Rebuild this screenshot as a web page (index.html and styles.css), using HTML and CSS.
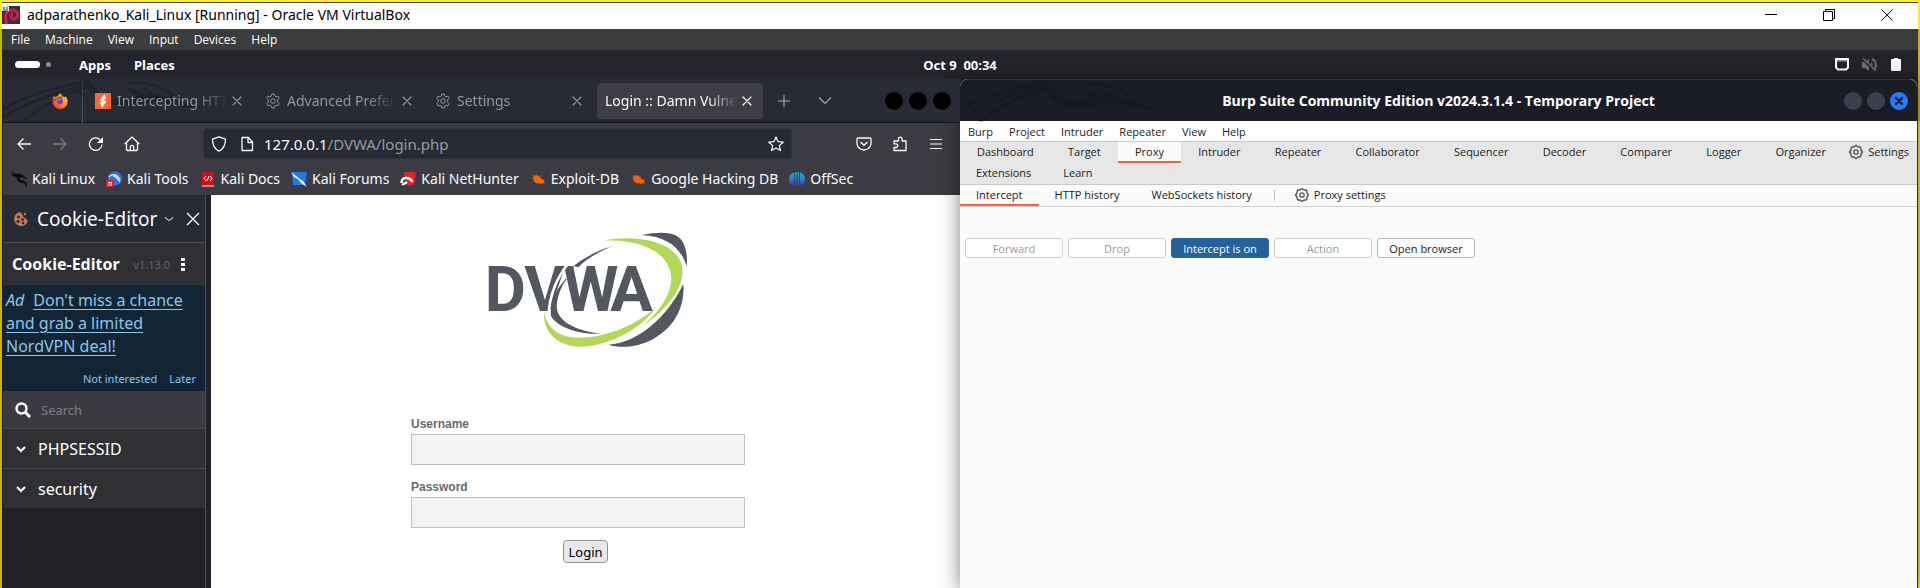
FILE: index.html
```html
<!DOCTYPE html>
<html lang="en">
<head>
<meta charset="utf-8">
<title>adparathenko_Kali_Linux [Running] - Oracle VM VirtualBox</title>
<link rel="stylesheet" href="styles.css">
</head>
<body>
<svg class="defs" width="0" height="0" aria-hidden="true">
  <symbol id="gear" viewBox="0 0 16 16">
    <path d="M6.8 1h2.4l.5 2 1.3.8 2-.6 1.2 2.1-1.5 1.5v2.4l1.5 1.5-1.2 2.1-2-.6-1.3.8-.5 2H6.800l-.5-2-1.300-.8-2 .6-1.200-2.100 1.500-1.500V6.800L1.800 5.300 3 3.200l2 .6L6.300 3z" fill="none" stroke="currentColor" stroke-linejoin="round"/>
    <circle cx="8" cy="8" r="2.300" fill="none" stroke="currentColor"/>
  </symbol>
  <symbol id="cog" viewBox="0 0 16 16">
    <path d="M8 1.500 9.700 2.700 12.500 3.300 13.100 6.200 14.500 8 13.100 9.800 12.500 12.700 9.700 13.300 8 14.500 6.300 13.300 3.500 12.700 2.900 9.800 1.500 8 2.900 6.200 3.500 3.300 6.300 2.700z" fill="none" stroke="currentColor" stroke-width="1.400" stroke-linejoin="round"/>
    <circle cx="8" cy="8" r="2.200" fill="none" stroke="currentColor" stroke-width="1.300"/>
  </symbol>
  <symbol id="cross" viewBox="0 0 16 16">
    <path d="M4 4l8 8M12 4l-8 8" fill="none" stroke="currentColor" stroke-width="1.200" stroke-linecap="round"/>
  </symbol>
  <symbol id="spider" viewBox="0 0 16 16">
    <path d="M3 5c2-1 5-1 7 1l2 2 3 2-1 1 .5 2-2-1-1 1-2-.5C6 12.500 4 11 3.500 9z" fill="#f2640c"/>
    <path d="M2 4l2 2M1 7.500h3M6 3l1 2M3.500 9.500L2 11M7 12l-1 1.500M10 4l1 2" stroke="#b5500f" stroke-width=".8" fill="none"/>
  </symbol>
  <symbol id="chev" viewBox="0 0 12 12">
    <path d="M2 4l4 4 4-4" fill="none" stroke="currentColor" stroke-width="2.200"/>
  </symbol>
  <symbol id="dragon" viewBox="0 0 210 42">
    <path d="M0 30C25 16 50 8 82 3M0 38C30 20 60 12 84 6M20 42C42 24 62 14 86 8M80 0c8 12 14 22 26 24 16 2 32-6 50-2 12 2 22 6 40 6M126 4c18-2 34 4 46 14M66 4l16 14" fill="none" stroke="#10131b" stroke-width="2.500"/>
    <path d="M78 0h8c6 10 14 18 24 20 16 2 30-8 48-4 14 4 24 10 38 12-20 0-32-8-50-4-14 2-30 6-42 0C92 18 86 8 78 0zM124 8l22 8-8-10 22 14-30-4z" fill="#10131b"/>
  </symbol>
</svg>

<header class="titlebar">
  <svg class="ico18" viewBox="0 0 18 18"><rect width="18" height="18" fill="#33303a"/><path d="M5 18C2 12 3 5 9 4c7-1 9 8 3 9-4 0-4-5-1-5" fill="none" stroke="#d8174f" stroke-width="3"/><rect width="7" height="5" fill="#e8e8e8"/><path d="M1 2h2M4 2h2M1 4h5" stroke="#444"/></svg>
  <span class="title">adparathenko_Kali_Linux [Running] - Oracle VM VirtualBox</span>
  <div class="caption">
    <button aria-label="Minimize"><svg viewBox="0 0 14 14"><path d="M1 6.500h12" stroke="#000"/></svg></button>
    <button aria-label="Restore"><svg viewBox="0 0 14 14"><path d="M1.500 3.500h9v9h-9zM3.500 3.500v-2h9v9h-2" fill="none" stroke="#000"/></svg></button>
    <button aria-label="Close"><svg viewBox="0 0 14 14"><path d="M1.500 1.500l11 11M12.500 1.500l-11 11" stroke="#000"/></svg></button>
  </div>
</header>

<nav class="vmmenu">
  <button>File</button><button>Machine</button><button>View</button><button>Input</button><button>Devices</button><button>Help</button>
</nav>

<div class="panel">
  <div class="panel-left">
    <span class="pill"></span><span class="dot"></span>
    <button class="apps">Apps</button><button>Places</button>
  </div>
  <time class="clock">Oct 9&nbsp; 00:34</time>
  <div class="tray">
    <svg viewBox="0 0 16 16"><path d="M2 2h12v8.500l-2 2H4l-2-2z" fill="none" stroke="#fff" stroke-width="2"/><path d="M4 2.500v2M6 2.500v2M8 2.500v2M10 2.500v2M12 2.500v2" stroke="#fff"/></svg>
    <svg viewBox="0 0 16 16"><path d="M1 5h3l4-3v12l-4-3H1zM10 5c2 1 2 4 0 6z" fill="#6d6e74"/><path d="M11 2c5 2 5 9 1 12" fill="none" stroke="#6d6e74" stroke-width="2"/><path d="M1 1l14 14" stroke="#23242c" stroke-width="3"/><path d="M2 1l13 13" stroke="#6d6e74" stroke-width="1.500"/></svg>
    <svg viewBox="0 0 16 16"><path d="M6 1h4v1h2q1 0 1 1v10q0 1-1 1H4q-1 0-1-1V3q0-1 1-1h2z" fill="#fff"/></svg>
  </div>
</div>

<main class="desktop">
  <section class="firefox">
    <div class="tabstrip">
      <svg class="watermark" aria-hidden="true"><use href="#dragon"/></svg>
      <div class="pinned"><svg class="ico" viewBox="0 0 16 16"><defs><linearGradient id="ff" x1="1" y1="0" x2="0" y2="1"><stop offset="0" stop-color="#ffe63b"/><stop offset=".5" stop-color="#ff8b1a"/><stop offset="1" stop-color="#f4155f"/></linearGradient></defs><path d="M8 16A7.600 7.600 0 0 1 .4 8c0-2 .8-4 2-5.200l.6 1.800C4 3.500 5 3.200 6 3.200 6 2 7.500.5 8.500 0c.2 2 3 2.500 3.800 4.500l.8-1.300c2 2 2.600 3.800 2.500 5.600A7.600 7.600 0 0 1 8 16z" fill="url(#ff)"/><circle cx="8" cy="8.300" r="3" fill="#7339dd"/><path d="M3.500 6c2-1 4-.5 5 .8-1.500.2-2 1-3.500 1z" fill="#ffa51f"/></svg></div>
      <div class="tab">
        <svg class="ico" viewBox="0 0 16 16"><rect width="16" height="16" fill="#ff6633"/><path d="M9.500 1L4.500 8h3L5 9.500 7 15l4.500-7h-3L11 5z" fill="#fff"/></svg>
        <span class="tab-label">Intercepting HTTP traffic</span><svg class="ico"><use href="#cross"/></svg>
      </div>
      <div class="tab"><svg class="ico"><use href="#gear"/></svg><span class="tab-label">Advanced Preferences</span><svg class="ico"><use href="#cross"/></svg></div>
      <div class="tab"><svg class="ico"><use href="#gear"/></svg><span class="tab-label">Settings</span><svg class="ico"><use href="#cross"/></svg></div>
      <div class="tab active"><span class="tab-label">Login :: Damn Vulnerable</span><svg class="ico"><use href="#cross"/></svg></div>
      <button class="strip-btn" aria-label="New tab"><svg class="ico" viewBox="0 0 16 16"><path d="M8 2v12M2 8h12" stroke="#a4a4a8" stroke-width="1.200"/></svg></button>
      <button class="strip-btn" aria-label="List all tabs"><svg class="ico" viewBox="0 0 16 16"><path d="M2 4.500l6 6 6-6" fill="none" stroke="#a4a4a8" stroke-width="1.200"/></svg></button>
      <div class="dots"><i></i><i></i><i></i></div>
    </div>

    <div class="toolbar">
      <div class="nav">
        <button aria-label="Back"><svg class="ico" viewBox="0 0 16 16"><path d="M15 8H2M7.500 2.500L2 8l5.500 5.500" fill="none" stroke="#fbfbfe" stroke-width="1.300"/></svg></button>
        <button aria-label="Forward"><svg class="ico" viewBox="0 0 16 16"><path d="M1 8h13M8.500 2.500L14 8l-5.500 5.500" fill="none" stroke="#7b7b80" stroke-width="1.300"/></svg></button>
        <button aria-label="Reload"><svg class="ico" viewBox="0 0 16 16"><path d="M14 8.500A6.300 6.300 0 1 1 12 3.500" fill="none" stroke="#fbfbfe" stroke-width="1.300"/><path d="M15 1v6H9z" fill="#fbfbfe"/></svg></button>
        <button aria-label="Home"><svg class="ico" viewBox="0 0 16 16"><path d="M.7 8L8 1l7.300 7M2.500 6.500V13.500q0 1 1 1h9q1 0 1-1V6.500M6.300 14.500V11a1.700 1.700 0 0 1 3.400 0v3.500" fill="none" stroke="#fbfbfe" stroke-width="1.300" stroke-linejoin="round"/></svg></button>
      </div>
      <div class="urlbar">
        <svg class="ico" viewBox="0 0 16 16"><path d="M8 .8l6.500 2.400c0 5-1.500 9.500-6.500 12C3 12.700 1.500 8.200 1.500 3.200z" fill="none" stroke="#fbfbfe" stroke-width="1.300" stroke-linejoin="round"/></svg>
        <svg class="ico" viewBox="0 0 16 16"><path d="M3 1.500h6.500L13.500 6v8.500H3zM9 1.500V6.500h4.500" fill="none" stroke="#fbfbfe" stroke-width="1.300" stroke-linejoin="round"/></svg>
        <span class="url"><b>127.0.0.1</b>/DVWA/login.php</span>
        <svg class="ico" viewBox="0 0 16 16"><path d="M8 1l2.100 4.700 5.100.5-3.900 3.400 1.200 5L8 12l-4.500 2.600 1.200-5L.8 6.200l5.100-.5z" fill="none" stroke="#fbfbfe" stroke-width="1.200" stroke-linejoin="round"/></svg>
      </div>
      <div class="tools">
        <button aria-label="Pocket"><svg class="ico" viewBox="0 0 16 16"><path d="M2 2h12q1 0 1 1v4.500a7 6.500 0 0 1-14 0V3q0-1 1-1z" fill="none" stroke="#fbfbfe" stroke-width="1.300"/><path d="M4.500 6L8 9.300 11.500 6" fill="none" stroke="#fbfbfe" stroke-width="1.500"/></svg></button>
        <button aria-label="Extensions"><svg class="ico" viewBox="0 0 16 16"><path d="M2 7V5h4.500V3a1.800 1.800 0 0 1 3.600 0v2H14v9.500H2V11.500h2a1.800 1.800 0 0 0 0-3.600H2z" fill="none" stroke="#fbfbfe" stroke-width="1.300" stroke-linejoin="round"/></svg></button>
        <button aria-label="Menu"><svg class="ico" viewBox="0 0 16 16"><path d="M2 3.500h12M2 8h12M2 12.500h12" stroke="#fbfbfe" stroke-width="1.200"/></svg></button>
      </div>
    </div>

    <nav class="bookmarks">
      <a href="#"><svg class="ico" viewBox="0 0 16 16"><path d="M0 1.500l5 1.500 4 0 4 2 3 3-4-2-4 .5 1 2.500 4 1 2.500 2 .5 4-3-4-5-1-2-3 0-2-6-2 4-.5z" fill="#0c0c0e" stroke="#0c0c0e" stroke-width=".5"/></svg>Kali Linux</a>
      <a href="#"><svg class="ico" viewBox="0 0 16 16"><circle cx="9" cy="7.500" r="7" fill="#2b72e8"/><path d="M3 6c3-4 8-3 11 3M7 5c3 0 4 2 7 6" fill="none" stroke="#dfeaff" stroke-width="1.300"/><rect y="9" width="8" height="7" rx="1" fill="#e02020"/><path d="M2 11.500h4M3 11.500V15M5.200 11.500V15" stroke="#fff" stroke-width=".9"/></svg>Kali Tools</a>
      <a href="#"><svg class="ico" viewBox="0 0 16 16"><path d="M2 1h12v13H2z" fill="#d30c14"/><path d="M2 15h12" stroke="#eee"/><path d="M6 5L4 7.500 6 10M10 5l2 2.500-2 2.500M9 5l-2 5" fill="none" stroke="#fff"/></svg>Kali Docs</a>
      <a href="#"><svg class="ico" viewBox="0 0 16 16"><path d="M1 1h15l-2 13H2z" fill="#1f78ee"/><path d="M0 1l5 4 4 3 3 2 4 6-6-4-3-4-4-2z" fill="#fff"/></svg>Kali Forums</a>
      <a href="#"><svg class="ico" viewBox="0 0 16 16"><path d="M3 1h13l-2 13-6 1z" fill="#e0222d"/><path d="M1.500 12c0-6 8-7 11-1M2 13c2 1 3-1 5-2" fill="none" stroke="#fff" stroke-width="2.500"/></svg>Kali NetHunter</a>
      <a href="#"><svg class="ico"><use href="#spider"/></svg>Exploit-DB</a>
      <a href="#"><svg class="ico"><use href="#spider"/></svg>Google Hacking DB</a>
      <a href="#"><svg class="ico" viewBox="0 0 16 16"><defs><linearGradient id="os" x1="0" y1="0" x2="0" y2="1"><stop offset="0" stop-color="#1cb5d8"/><stop offset="1" stop-color="#4a35c8"/></linearGradient></defs><path d="M5 1.500Q0 3 0 8q0 4 3 6.500Q6 13 5 1.500zM11 1.500Q16 3 16 8q0 4-3 6.500Q10 13 11 1.500zM6 1h1.500v14H6zM8.500 1H10v14H8.500z" fill="url(#os)"/></svg>OffSec</a>
    </nav>

    <div class="content">
      <aside class="sidebar">
        <div class="side-head">
          <svg class="ico" viewBox="0 0 16 16"><path d="M8 1a7 7 0 1 0 7 8q-2 .5-2.500-2-2.500 0-2.500-2.500Q8 4 8 1z" fill="#c17a55"/><circle cx="5.500" cy="6" r="1.400" fill="#2a2530"/><circle cx="5" cy="10.500" r="1.400" fill="#2a2530"/><circle cx="9.500" cy="8.500" r="1.300" fill="#2a2530"/><circle cx="10" cy="12" r="1.200" fill="#2a2530"/><circle cx="12" cy="3" r="1.200" fill="#c17a55"/></svg>
          <button class="side-title">Cookie-Editor<svg class="ico10" viewBox="0 0 12 12"><path d="M1 4l5 4 5-4" fill="none" stroke="#cfcfd4" stroke-width="1.300"/></svg></button>
          <button class="side-close" aria-label="Close sidebar"><svg class="ico" viewBox="0 0 16 16"><path d="M2 2l12 12M14 2l-12 12" stroke="#fbfbfe" stroke-width="1.300"/></svg></button>
        </div>
        <div class="ext-head">
          <strong>Cookie-Editor</strong><small>v1.13.0</small>
          <button aria-label="Options"><svg class="kebab" viewBox="0 0 6 14"><path d="M1 1h4v3H1zM1 6h4v3H1zM1 11h4v3H1z" fill="#fff"/></svg></button>
        </div>
        <div class="ad">
          <p><em>Ad</em><a href="#">Don't miss a chance and grab a limited NordVPN deal!</a></p>
          <div class="ad-actions"><button>Not interested</button><button>Later</button></div>
        </div>
        <label class="search"><svg class="ico" viewBox="0 0 16 16"><circle cx="6.500" cy="6.500" r="5" fill="none" stroke="#fff" stroke-width="2.400"/><path d="M10 10l5 5" stroke="#fff" stroke-width="2.800"/></svg><input type="text" placeholder="Search" aria-label="Search"></label>
        <button class="cookie"><svg class="ico12"><use href="#chev"/></svg>PHPSESSID</button>
        <button class="cookie"><svg class="ico12"><use href="#chev"/></svg>security</button>
      </aside>

      <div class="page">
        <svg class="logo" viewBox="0 0 690 420" role="img" aria-label="DVWA">
          <path d="M432 76C370 94 330 120 308 138L322 142C350 112 390 92 432 76z" fill="#53575f"/>
          <text x="41 160 276 418" y="273" class="logo-text">DVWA</text>
          <path d="M290 132C262 170 236 215 232 290" fill="none" stroke="#fff" stroke-width="8"/>
          <path d="M284 176C250 216 236 248 240 288 262 326 330 344 390 341 300 330 250 296 258 248 262 222 272 196 288 176z" fill="#53575f"/>
          <path d="M512 45C575 32 618 36 634 64 646 86 650 110 647 139 630 84 590 50 512 45z" fill="#53575f"/>
          <path d="M637 192C642 260 612 320 548 356 500 382 450 386 412 374 500 370 590 290 637 192z" fill="#53575f"/>
          <path d="M398 62C500 42 600 66 628 122 654 186 596 264 518 316 590 250 616 190 592 138 566 84 490 58 398 62z" fill="#b4d757"/>
          <path d="M219 277C232 336 280 360 350 352 430 344 510 304 556 260 520 320 420 376 334 380 262 382 216 340 219 277z" fill="#b4d757"/>
        </svg>
        <form class="login">
          <div class="fields">
            <label for="user">Username</label>
            <input id="user" type="text">
            <label for="pass">Password</label>
            <input id="pass" type="password">
          </div>
          <button type="button">Login</button>
        </form>
      </div>
    </div>
  </section>

  <section class="burp">
    <div class="burp-title">
      <svg class="watermark" aria-hidden="true"><use href="#dragon"/></svg>
      <h1>Burp Suite Community Edition v2024.3.1.4 - Temporary Project</h1>
      <div class="wm"><button aria-label="Minimize"></button><button aria-label="Maximize"></button><button class="close" aria-label="Close"><svg viewBox="0 0 18 18"><path d="M6 6l6 6M12 6l-6 6" stroke="#0d1a33" stroke-width="2.400" stroke-linecap="round"/></svg></button></div>
    </div>
    <nav class="burp-menu"><button>Burp</button><button>Project</button><button>Intruder</button><button>Repeater</button><button>View</button><button>Help</button></nav>
    <nav class="burp-tabs">
      <div class="row spread">
        <button>Dashboard</button><button>Target</button><button class="on">Proxy</button><button>Intruder</button><button>Repeater</button><button>Collaborator</button><button>Sequencer</button><button>Decoder</button><button>Comparer</button><button>Logger</button><button>Organizer</button>
        <button class="settings"><svg class="ico"><use href="#cog"/></svg>Settings</button>
      </div>
      <div class="row"><button>Extensions</button><button>Learn</button></div>
    </nav>
    <nav class="subtabs">
      <button class="on">Intercept</button><button>HTTP history</button><button>WebSockets history</button><span class="sep"></span>
      <button class="settings"><svg class="ico"><use href="#cog"/></svg>Proxy settings</button>
    </nav>
    <div class="actions">
      <button disabled>Forward</button><button disabled>Drop</button><button class="primary">Intercept is on</button><button disabled>Action</button><button>Open browser</button>
    </div>
  </section>
</main>
</body>
</html>
```
FILE: styles.css
```css
* { box-sizing: border-box; }

body {
  margin: 0;
  min-height: 100vh;
  padding: 2px 2px 0 2px;
  display: flex;
  flex-direction: column;
  font-family: "Noto Sans", sans-serif;
  background:
    linear-gradient(#ffe838 29px, #c9b407 29px) left / 50% 100% no-repeat,
    linear-gradient(#ffe838 29px, #c9b407 29px, #c9b407 121px, #ffe94f 121px) right / 50% 100% no-repeat;
}

button {
  margin: 0;
  padding: 0;
  border: 0;
  background: none;
  color: inherit;
  font: inherit;
  white-space: nowrap;
}

svg { display: block; flex: none; }
.defs { position: absolute; }
.ico { width: 16px; height: 16px; }
.ico18 { width: 18px; height: 18px; }
.ico12 { width: 12px; height: 12px; }
.ico10 { width: 10px; height: 10px; }

/* Host window */
.titlebar {
  height: 27px;
  padding-bottom: 3px;
  display: flex;
  align-items: center;
  gap: 7px;
  background: #fff;
  border-top: 1px solid #4b4720;
  color: #000;
}
.title { font-size: 14px; line-height: 18px; flex: 1; white-space: nowrap; }
.caption { display: flex; gap: 44px; padding-right: 24px; }
.caption svg { width: 14px; height: 14px; }

.vmmenu {
  height: 21px;
  padding: 0 9px;
  display: flex;
  align-items: center;
  gap: 15px;
  background: #3b3c3d;
  color: #fff;
  font-family: "Open Sans", sans-serif;
  font-size: 12px;
}

/* Guest desktop */
.panel {
  height: 29px;
  display: grid;
  grid-template-columns: 1fr auto 1fr;
  align-items: center;
  background: #23242c;
  color: #fff;
  font-size: 13px;
  font-weight: 700;
}
.panel-left { display: flex; align-items: center; padding-left: 13px; }
.pill { width: 25px; height: 7px; border-radius: 4px; background: #fff; }
.dot { width: 5px; height: 5px; margin-left: 6px; border-radius: 50%; background: #8d8e94; }
.panel-left .apps { margin: 0 23px 0 28px; }
.tray { display: flex; justify-content: flex-end; gap: 11px; padding-right: 14px; }
.tray svg { width: 16px; height: 16px; }

.desktop { flex: 1; display: grid; grid-template-columns: 1fr 1fr; background: #23242c; }

/* Firefox */
.firefox { display: flex; flex-direction: column; min-width: 0; border-left: 1px solid #191a1f; background: #3b3c43; color: #fbfbfe; font-size: 14px; }
.tabstrip {
  position: relative;
  height: 44px;
  padding-right: 9px;
  display: flex;
  align-items: center;
  background: #282a35;
  border-bottom: 1px solid #15161b;
  color: #94959c;
}
.watermark { position: absolute; left: 0; top: 0; width: 210px; height: 42px; opacity: .35; }
.pinned { width: 80px; height: 44px; padding: 14px 0 0 49px; border-right: 1px solid #4c4d57; }
.tab { position: relative; flex: 0 1 170px; min-width: 0; height: 36px; padding: 0 8px 0 12px; display: flex; align-items: center; gap: 6px; }
.tab-label {
  flex: 1;
  min-width: 0;
  overflow: hidden;
  white-space: nowrap;
  mask-image: linear-gradient(to left, transparent, #000 30px);
}
.tab .tab-label + .ico { margin-left: -4px; }
.tab.active { flex-basis: 166px; margin-left: 4px; padding: 0 8px; border-radius: 4px; background: #3d3e46; color: #fbfbfe; }
.strip-btn { width: 41px; display: grid; place-items: center; }
.dots { display: flex; gap: 6px; margin-left: auto; }
.dots i { width: 18px; height: 18px; border-radius: 50%; background: #000; }

.toolbar { height: 41px; padding: 0 16px 0 13px; display: flex; align-items: center; }
.nav { display: flex; gap: 20px; }
.urlbar {
  flex: 1;
  height: 31px;
  margin: 0 64px 0 63px;
  padding: 0 7px;
  display: flex;
  align-items: center;
  gap: 12px;
  border: 1px solid #30313a;
  border-radius: 4px;
  background: #272935;
  color: #9a9ba2;
  font-size: 15px;
}
.url { flex: 1; white-space: nowrap; margin-left: -3px; }
.url b { font-weight: 400; color: #fbfbfe; }
.tools { display: flex; gap: 20px; }

.bookmarks { height: 31px; padding: 0 8px 2px 8px; display: flex; align-items: center; gap: 11px; }
.bookmarks a { display: flex; align-items: center; gap: 5px; color: #fbfbfe; text-decoration: none; white-space: nowrap; }

.content { flex: 1; display: flex; }
.sidebar { width: 203px; display: flex; flex-direction: column; border-right: 1px solid #4c4d55; background: #202124; }
.side-head { height: 48px; padding: 0 4px 0 10px; display: flex; align-items: center; gap: 8px; background: #282a35; border-bottom: 1px solid #4c4d57; font-size: 19px; }
.side-title { display: flex; align-items: center; gap: 7px; }
.side-close { margin-left: auto; }
.ext-head { height: 42px; padding: 0 19px 0 9px; display: flex; align-items: center; background: #2f3033; font-size: 16px; }
.ext-head small { margin-left: auto; margin-right: 10px; color: #626368; font-size: 11px; }
.kebab { width: 6px; height: 14px; }
.ad { height: 106px; padding: 4px 9px 5px 3px; display: flex; flex-direction: column; justify-content: space-between; background: #112535; color: #8ac6ea; font-size: 16px; line-height: 23px; }
.ad p { margin: 0; }
.ad em { margin-right: 9px; }
.ad a { color: inherit; text-underline-offset: 3px; }
.ad-actions { display: flex; justify-content: flex-end; gap: 12px; font-size: 11px; line-height: 15px; }
.search { height: 38px; padding: 0 12px; display: flex; align-items: center; gap: 10px; background: #3a3b42; border-bottom: 1px solid #45464d; }
.search input { flex: 1; min-width: 0; border: 0; padding: 0; background: none; color: #fff; font: 13px "Noto Sans", sans-serif; }
.search input::placeholder { color: #7d7e85; }
.cookie { height: 39px; padding: 0 12px; display: flex; align-items: center; gap: 11px; background: #2f3033; color: #fff; font-size: 16px; }
.cookie + .cookie { height: 40px; border-top: 1px solid #45464b; }

.page { flex: 1; display: flex; flex-direction: column; align-items: center; background: #fff; border-left: 5px solid #1f2029; }
.logo { width: 230px; height: 140px; margin-top: 25px; }
.logo-text { font: 700 190px Roboto, "Noto Sans", sans-serif; fill: #53575f; }
.login { margin-top: 56px; display: flex; flex-direction: column; align-items: center; color: #6a6a6a; font-family: "Liberation Sans", sans-serif; }
.fields { width: 334px; margin-right: 15px; display: flex; flex-direction: column; }
.login label { font-size: 12px; font-weight: 700; line-height: 16px; margin-bottom: 2px; }
.login input { height: 31px; margin-bottom: 14px; border: 1px solid #c1c1c1; background: #f3f3f3; }
.login input:last-child { margin-bottom: 12px; }
.login button { height: 23px; padding: 0 4px; border: 1px solid #8f8f9d; border-radius: 4px; background: #e9e9ed; color: #000; font: 13px "Noto Sans", sans-serif; }

/* Burp Suite */
.burp { min-width: 0; background: #fbfbfb; color: #1c1c1c; font-family: "Open Sans", sans-serif; font-size: 11px; border-radius: 8px 8px 0 0; box-shadow: 0 2px 20px rgba(0, 0, 0, .5); border-right: 1px solid #2c2c2c; }
.burp-title {
  position: relative;
  height: 42px;
  padding: 0 9px;
  display: grid;
  grid-template-columns: 1fr auto 1fr;
  align-items: center;
  border-top: 1px solid #2f313a;
  border-radius: 8px 8px 0 0;
  background: #1b1d26;
  color: #fff;
}
.burp-title h1 { grid-column: 2; margin: 0; font-size: 14px; font-weight: 700; }
.wm { display: flex; justify-content: flex-end; gap: 5px; }
.wm button { width: 18px; height: 18px; border-radius: 50%; background: #3e3f4e; }
.wm .close { background: #2777ff; }

.burp-menu { height: 21px; padding: 0 8px; display: flex; gap: 16px; align-items: center; background: #fff; border-bottom: 1px solid #c9c9c9; }
.burp-tabs { background: #e6e6e6; border-bottom: 1px solid #cacaca; }
.row { height: 21px; display: flex; }
.row button { padding: 0 16px; border-bottom: 2px solid transparent; }
.spread { justify-content: space-between; }
.spread button { padding: 0 17px; }
.row .on { background: #fbfbfb; border-color: #e8663d; }
.burp .settings { display: flex; align-items: center; gap: 4px; padding: 0 8px 0 5px; color: #1c1c1c; }
.settings svg { color: #555; }
.subtabs { height: 22px; display: flex; align-items: stretch; border-bottom: 1px solid #cfcfcf; }
.subtabs button { padding: 0 16px; border-bottom: 2px solid transparent; }
.subtabs .on { border-color: #f0653a; }
.sep { width: 1px; margin: 5px 14px 5px 6px; background: #c4c4c4; }
.actions { display: flex; gap: 5px; padding: 31px 5px; }
.actions button { width: 98px; height: 20px; border: 1px solid #b5b5b5; border-radius: 3px; background: #fff; color: #1c1c1c; }
.actions button:disabled { border-color: #cfcfcf; color: #999; }
.actions .primary { border-color: #25629b; background: #25629b; color: #fff; }
```
